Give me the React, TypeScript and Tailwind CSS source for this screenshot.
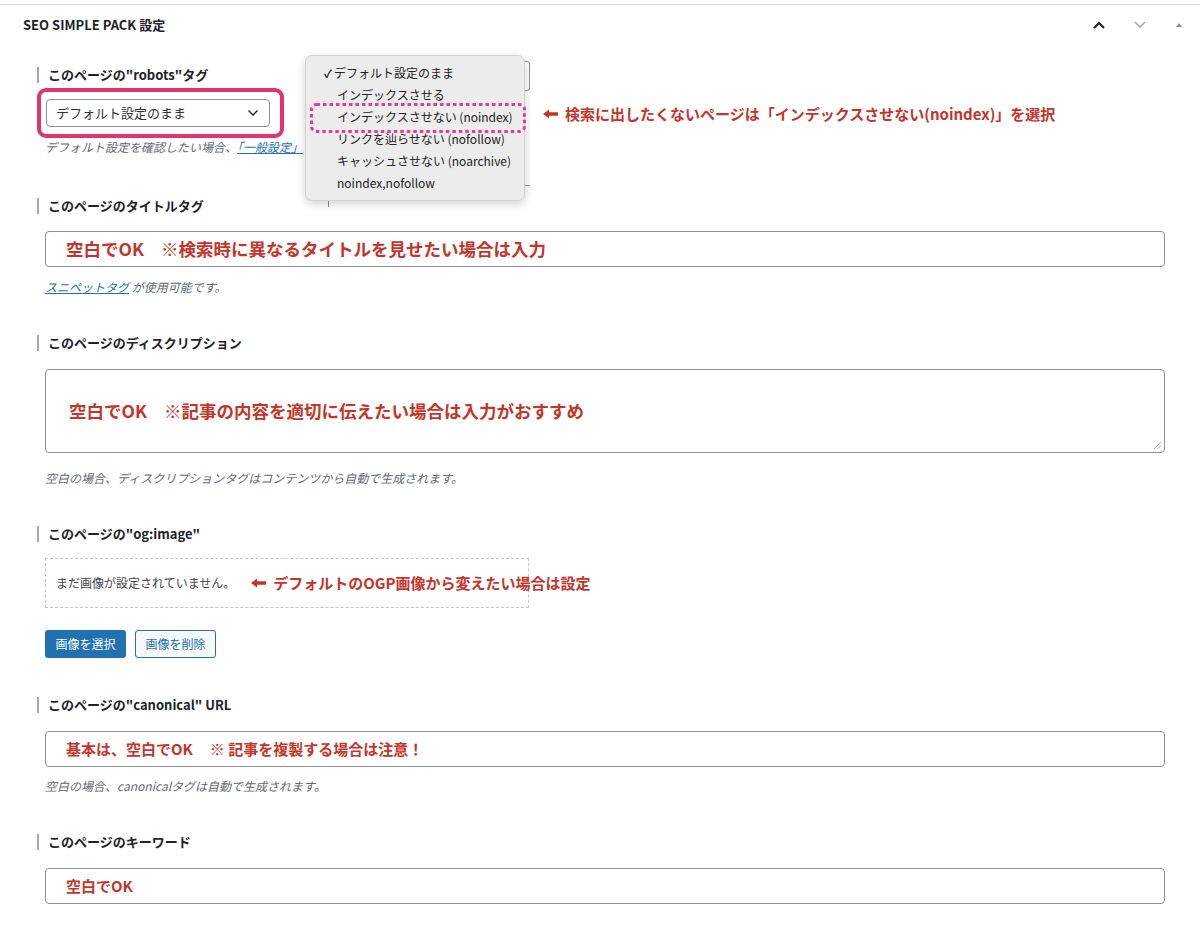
import React from "react";

const RED = "text-[#c5342a]";

function Label({ children }: { children: React.ReactNode }) {
  return (
    <div className="flex h-4 items-center border-l-2 border-[#a3aba3] pl-[9px] text-[13px] font-bold leading-4 text-[#1d2327]">
      {children}
    </div>
  );
}

function Arrow() {
  return (
    <svg width="15" height="10" viewBox="0 0 15 10" className="mr-[7px] shrink-0">
      <path d="M0 5 L6 0.5 L6 3.3 L15 3.3 L15 6.7 L6 6.7 L6 9.5 Z" fill="#c5342a" />
    </svg>
  );
}

function Help({ children }: { children: React.ReactNode }) {
  return <p className="ml-[8px] text-[12px] italic leading-4 text-[#646970]">{children}</p>;
}

function TextBox({ children, size = "text-[17.5px]" }: { children: React.ReactNode; size?: string }) {
  return (
    <div className={`ml-2 flex h-[36px] items-center whitespace-nowrap rounded-[4px] border border-[#8c8f94] bg-white pl-[20px] font-bold ${size} ${RED}`}>
      {children}
    </div>
  );
}

const options = [
  "インデックスさせる",
  "インデックスさせない (noindex)",
  "リンクを辿らせない (nofollow)",
  "キャッシュさせない (noarchive)",
  "noindex,nofollow",
];

export default function App() {
  return (
    <div
      className="relative min-h-[942px] bg-white pt-1 text-[#1d2327]"
      style={{ fontFamily: '"Noto Sans CJK JP", "Noto Sans", sans-serif' }}
    >
      <div className="border-t border-[#dcdcde]">
        {/* header */}
        <div className="flex h-[40px] items-center justify-between pl-[23px] pr-[16px]">
          <h2 className="text-[13px] font-semibold text-[#1d2327]">SEO SIMPLE PACK 設定</h2>
          <div className="flex items-center gap-[27px]">
            <svg width="14" height="10" viewBox="0 0 14 10">
              <path d="M2 8 L7 3 L12 8" stroke="#1d2327" strokeWidth="2.2" fill="none" />
            </svg>
            <svg width="14" height="10" viewBox="0 0 14 10">
              <path d="M2 2 L7 7 L12 2" stroke="#a7aaad" strokeWidth="1.6" fill="none" />
            </svg>
            <svg width="10" height="8" viewBox="0 0 10 8">
              <path d="M2 6 L5 2 L8 6 Z" fill="#8c8f94" />
            </svg>
          </div>
        </div>

        <div className="pl-[37px] pr-[35px]">
          {/* robots */}
          <div className="mt-[22px]">
            <Label>このページの"robots"タグ</Label>
            <div className="mt-[5px] w-[247px] rounded-[9px] border-4 border-[#e2336e] py-[7px] pl-[5px] pr-[10px]">
              <div className="flex h-[28px] items-center justify-between rounded-[4px] border border-[#8c8f94] bg-white pl-[9px] pr-[10px] text-[13px] text-[#2c3338]">
                <span>デフォルト設定のまま</span>
                <svg width="12" height="8" viewBox="0 0 12 8">
                  <path d="M1.5 1.5 L6 6 L10.5 1.5" stroke="#1d2327" strokeWidth="1.4" fill="none" />
                </svg>
              </div>
            </div>
            <p className="ml-[8px] mt-[1px] text-[12px] italic leading-4 text-[#646970]">
              デフォルト設定を確認したい場合、<span className="text-[#2271b1] underline">「一般設定」</span>
            </p>
          </div>

          {/* title */}
          <div className="mt-[43px]">
            <Label>このページのタイトルタグ</Label>
            <div className="mt-[17px]">
              <TextBox>
                空白でOK<span className="inline-block w-[17px]" />※検索時に異なるタイトルを見せたい場合は入力
              </TextBox>
            </div>
            <div className="mt-[12px]">
              <Help>
                <span className="text-[#2271b1] underline">スニペットタグ</span> が使用可能です。
              </Help>
            </div>
          </div>

          {/* description */}
          <div className="mt-[40px]">
            <Label>このページのディスクリプション</Label>
            <div className={`relative ml-2 mt-[18px] flex h-[84px] items-center whitespace-nowrap rounded-[4px] border border-[#8c8f94] bg-white pl-[23px] text-[17.5px] font-bold ${RED}`}>
              空白でOK<span className="inline-block w-[17px]" />※記事の内容を適切に伝えたい場合は入力がおすすめ
              <svg width="9" height="9" viewBox="0 0 9 9" className="absolute bottom-[2px] right-[2px]">
                <path d="M8 1 L1 8 M8 4.5 L4.5 8" stroke="#a7aaad" strokeWidth="1" />
              </svg>
            </div>
            <div className="mt-[17px]">
              <Help>空白の場合、ディスクリプションタグはコンテンツから自動で生成されます。</Help>
            </div>
          </div>

          {/* og:image */}
          <div className="mt-[40px]">
            <Label>このページの"og:image"</Label>
            <div className="ml-2 mt-[16px] flex h-[50px] w-[484px] items-center whitespace-nowrap border border-dashed border-[#c3c4c7] pl-[10px]">
              <span className="text-[12px] text-[#3c434a]">まだ画像が設定されていません。</span>
              <span className={`ml-[16px] flex items-center text-[15px] font-bold ${RED}`}>
                <Arrow />
                デフォルトのOGP画像から変えたい場合は設定
              </span>
            </div>
            <div className="ml-2 mt-[22px] flex gap-[9px]">
              <button className="h-[28px] w-[81px] rounded-[3px] bg-[#2271b1] text-[12px] text-white">画像を選択</button>
              <button className="h-[28px] w-[81px] rounded-[3px] border border-[#2271b1] bg-[#f6f7f7] text-[12px] text-[#2271b1]">
                画像を削除
              </button>
            </div>
          </div>

          {/* canonical */}
          <div className="mt-[39px]">
            <Label>このページの"canonical" URL</Label>
            <div className="mt-[18px]">
              <TextBox size="text-[15px]">
                基本は、空白でOK<span className="inline-block w-[17px]" />※ 記事を複製する場合は注意！
              </TextBox>
            </div>
            <div className="mt-[11px]">
              <Help>空白の場合、canonicalタグは自動で生成されます。</Help>
            </div>
          </div>

          {/* keywords */}
          <div className="mt-[40px]">
            <Label>このページのキーワード</Label>
            <div className="mt-[18px]">
              <TextBox size="text-[15px]">空白でOK</TextBox>
            </div>
          </div>
        </div>
      </div>

      {/* element behind the open menu */}
      <div className="absolute left-[327px] top-[61px] h-[30px] w-[203px] rounded-[3px] border border-[#8c8f94] bg-white" />
      <div className="absolute left-[328px] top-[91px] h-[116px] w-px bg-[#8c8f94]" />
      <div className="absolute left-[522px] top-[185px] h-px w-[8px] bg-[#8c8f94]" />

      {/* open dropdown */}
      <div className="absolute left-[305px] top-[55px] w-[220px] rounded-[7px] border border-[#d4d4d4] bg-[#ececec] pb-[6px] pt-[6px] text-[12px] text-[#222] shadow-[0_3px_10px_rgba(0,0,0,0.18)]">
        <div className="flex h-[22px] items-center pl-[18px]">
          <span className="mr-[2px] text-[11px] font-bold">✓</span>デフォルト設定のまま
        </div>
        {options.map((o) => (
          <div key={o} className="flex h-[22px] items-center pl-[31px]">
            {o}
          </div>
        ))}
      </div>

      {/* dotted highlight */}
      <svg className="absolute left-[310px] top-[103px]" width="216" height="30" viewBox="0 0 216 30">
        <rect x="1.5" y="1.5" width="213" height="27" rx="5" fill="none" stroke="#e0408a" strokeWidth="3" strokeDasharray="3.5 3" />
      </svg>

      {/* annotation */}
      <div className={`absolute left-[543px] top-[104px] flex h-[20px] items-center text-[15px] font-bold ${RED}`}>
        <Arrow />
        検索に出したくないページは「インデックスさせない(noindex)」を選択
      </div>
    </div>
  );
}
